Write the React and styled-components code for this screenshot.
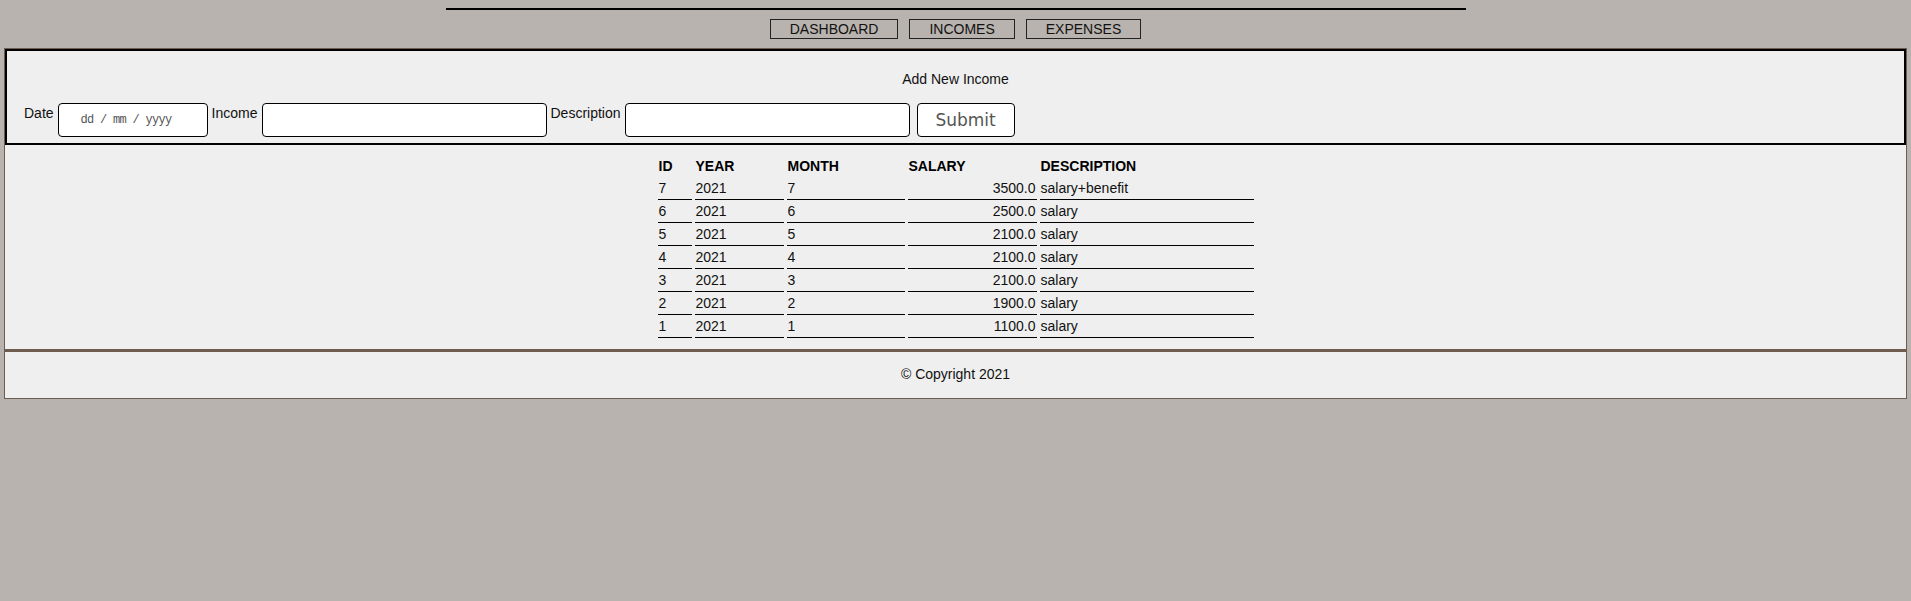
import React, { useState } from "react";
import styled, { createGlobalStyle } from "styled-components";

const GlobalStyle = createGlobalStyle`
  body {
    margin: 0;
    background: #b8b3ae;
    font-family: "Liberation Sans", Arial, sans-serif;
    font-size: 14px;
    color: #111;
  }
`;

//header
const Header = styled.header`
  padding-top: 8px;
  display: flex;
  flex-direction: column;
  align-items: center;
  margin-bottom: 9px;
`;

const Rule = styled.div`
  width: 1020px;
  height: 2px;
  background: #000;
  margin-bottom: 9px;
`;

const Nav = styled.nav`
  display: flex;
  gap: 11px;
`;

const NavButton = styled.button`
  height: 20px;
  padding: 0 19px;
  border: 1px solid #222;
  background: transparent;
  font-family: "Liberation Sans", Arial, sans-serif;
  font-size: 14px;
  line-height: 18px;
  color: #111;
  cursor: pointer;
`;

//main
const Main = styled.main`
  margin: 0 4px;
  border: 1px solid #6e5d4e;
  background: #efefef;
`;

const FormBox = styled.form`
  border: 2px solid #000;
  padding: 20px 17px 6px;
`;

const FormTitle = styled.div`
  text-align: center;
  line-height: 16px;
  margin-bottom: 16px;
`;

const FormRow = styled.div`
  display: flex;
  align-items: flex-start;
  gap: 4px;
`;

const Label = styled.label`
  line-height: 16px;
  margin-top: 2px;
`;

const Input = styled.input`
  box-sizing: border-box;
  width: ${(p) => p.$w}px;
  height: 34px;
  border: 1px solid #000;
  border-radius: 4px;
  background: #fff;
  padding: 0 6px;
  font-family: "Liberation Sans", Arial, sans-serif;
  font-size: 14px;
  outline: none;
`;

const DateInput = styled(Input)`
  padding-left: 22px;
  font-family: "Liberation Mono", "DejaVu Sans Mono", monospace;
  font-size: 12px;
  letter-spacing: -0.7px;
  &::placeholder {
    color: #555;
  }
`;

const SubmitButton = styled.button`
  box-sizing: border-box;
  width: 98px;
  height: 34px;
  margin-left: 3px;
  border: 1px solid #000;
  border-radius: 4px;
  background: #fff;
  font-family: "DejaVu Sans", sans-serif;
  font-size: 17px;
  color: #555;
`;

const TableSection = styled.section`
  padding: 10px 0 11px;
`;

const Table = styled.table`
  margin: 0 auto;
  border-collapse: separate;
  border-spacing: 3px 0;
  table-layout: fixed;
`;

const Th = styled.th`
  box-sizing: border-box;
  width: ${(p) => p.$w}px;
  padding: 2px 1px;
  line-height: 18px;
  text-align: left;
  font-weight: bold;
  color: #000;
`;

const Td = styled.td`
  padding: 2px 1px;
  line-height: 18px;
  border-bottom: 1px solid #000;
  text-align: ${(p) => (p.$right ? "right" : "left")};
  color: #111;
`;

//footer
const Footer = styled.footer`
  margin: 0 4px;
  border: 1px solid #6e5d4e;
  border-top-width: 2px;
  background: #efefef;
  padding: 14px 0 16px;
  text-align: center;
  line-height: 16px;
`;

const incomes = [
  { id: 7, year: 2021, month: 7, salary: 3500, description: "salary+benefit" },
  { id: 6, year: 2021, month: 6, salary: 2500, description: "salary" },
  { id: 5, year: 2021, month: 5, salary: 2100, description: "salary" },
  { id: 4, year: 2021, month: 4, salary: 2100, description: "salary" },
  { id: 3, year: 2021, month: 3, salary: 2100, description: "salary" },
  { id: 2, year: 2021, month: 2, salary: 1900, description: "salary" },
  { id: 1, year: 2021, month: 1, salary: 1100, description: "salary" },
];

const App = () => {
  let [date, setDate] = useState("");
  let [income, setIncome] = useState("");
  let [description, setDescription] = useState("");

  return (
    <>
      <GlobalStyle />
      <Header>
        <Rule />
        <Nav>
          <NavButton>DASHBOARD</NavButton>
          <NavButton>INCOMES</NavButton>
          <NavButton>EXPENSES</NavButton>
        </Nav>
      </Header>
      <Main>
        <FormBox onSubmit={(e) => e.preventDefault()}>
          <FormTitle>Add New Income</FormTitle>
          <FormRow>
            <Label>Date</Label>
            <DateInput
              $w={150}
              placeholder="dd / mm / yyyy"
              value={date}
              onChange={(e) => setDate(e.target.value)}
            />
            <Label>Income</Label>
            <Input
              $w={285}
              value={income}
              onChange={(e) => setIncome(e.target.value)}
            />
            <Label>Description</Label>
            <Input
              $w={285}
              value={description}
              onChange={(e) => setDescription(e.target.value)}
            />
            <SubmitButton type="submit">Submit</SubmitButton>
          </FormRow>
        </FormBox>
        <TableSection>
          <Table>
            <thead>
              <tr>
                <Th $w={34}>ID</Th>
                <Th $w={89}>YEAR</Th>
                <Th $w={118}>MONTH</Th>
                <Th $w={129}>SALARY</Th>
                <Th $w={214}>DESCRIPTION</Th>
              </tr>
            </thead>
            <tbody>
              {incomes.map((item) => (
                <tr key={item.id}>
                  <Td>{item.id}</Td>
                  <Td>{item.year}</Td>
                  <Td>{item.month}</Td>
                  <Td $right>{item.salary.toFixed(1)}</Td>
                  <Td>{item.description}</Td>
                </tr>
              ))}
            </tbody>
          </Table>
        </TableSection>
      </Main>
      <Footer>© Copyright 2021</Footer>
    </>
  );
};

export default App;
